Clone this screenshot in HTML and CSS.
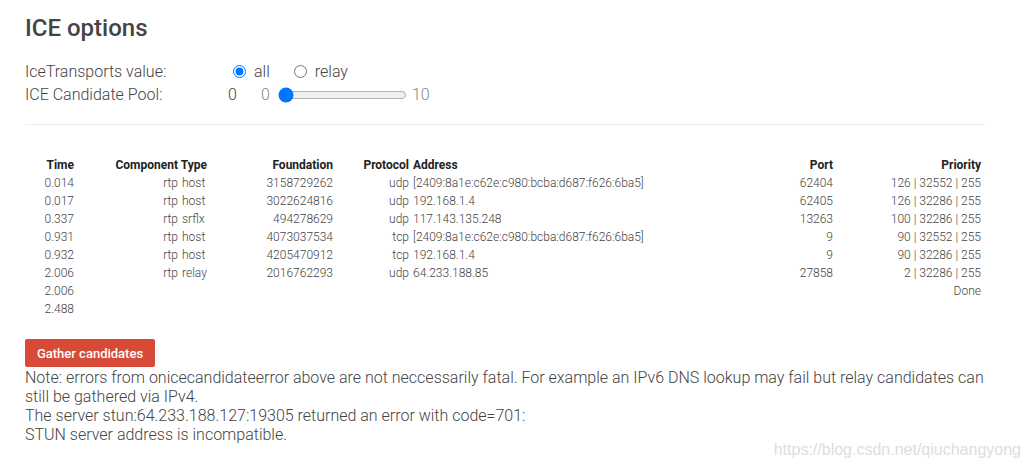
FILE: index.html
```html
<!DOCTYPE html>
<html>
<head>
<meta charset="utf-8">
<link rel="stylesheet" href="styles.css">
</head>
<body>
<div class="page">
  <h2 class="title">ICE options</h2>
  <div class="row">
    <span class="label">IceTransports value:</span>
    <input class="radio" type="radio" name="t" checked><span class="opt">all</span>
    <input class="radio radio-2" type="radio" name="t"><span class="opt">relay</span>
  </div>
  <div class="row">
    <span class="label">ICE Candidate Pool:</span>
    <span class="pool">0</span>
    <span class="muted">0</span>
    <input class="range" type="range" min="0" max="10" value="0">
    <span class="muted">10</span>
  </div>
  <div class="rule"></div>
  <table class="cands">
    <colgroup>
      <col class="c-time"><col class="c-comp"><col class="c-type"><col class="c-found"><col class="c-proto"><col class="c-addr"><col class="c-port"><col class="c-prio">
    </colgroup>
    <thead>
      <tr><th>Time</th><th>Component</th><th>Type</th><th>Foundation</th><th>Protocol</th><th class="l">Address</th><th>Port</th><th>Priority</th></tr>
    </thead>
    <tbody>
      <tr><td>0.014</td><td class="comp">rtp</td><td class="l">host</td><td>3158729262</td><td>udp</td><td class="l">[2409:8a1e:c62e:c980:bcba:d687:f626:6ba5]</td><td>62404</td><td>126 | 32552 | 255</td></tr>
      <tr><td>0.017</td><td class="comp">rtp</td><td class="l">host</td><td>3022624816</td><td>udp</td><td class="l">192.168.1.4</td><td>62405</td><td>126 | 32286 | 255</td></tr>
      <tr><td>0.337</td><td class="comp">rtp</td><td class="l">srflx</td><td>494278629</td><td>udp</td><td class="l">117.143.135.248</td><td>13263</td><td>100 | 32286 | 255</td></tr>
      <tr><td>0.931</td><td class="comp">rtp</td><td class="l">host</td><td>4073037534</td><td>tcp</td><td class="l">[2409:8a1e:c62e:c980:bcba:d687:f626:6ba5]</td><td>9</td><td>90 | 32552 | 255</td></tr>
      <tr><td>0.932</td><td class="comp">rtp</td><td class="l">host</td><td>4205470912</td><td>tcp</td><td class="l">192.168.1.4</td><td>9</td><td>90 | 32286 | 255</td></tr>
      <tr><td>2.006</td><td class="comp">rtp</td><td class="l">relay</td><td>2016762293</td><td>udp</td><td class="l">64.233.188.85</td><td>27858</td><td>2 | 32286 | 255</td></tr>
      <tr><td>2.006</td><td></td><td></td><td></td><td></td><td></td><td></td><td>Done</td></tr>
      <tr><td>2.488</td><td></td><td></td><td></td><td></td><td></td><td></td><td></td></tr>
    </tbody>
  </table>
  <button class="gather">Gather candidates</button>
  <div class="note">
    <div>Note: errors from onicecandidateerror above are not neccessarily fatal. For example an IPv6 DNS lookup may fail but relay candidates can still be gathered via IPv4.</div>
    <div>The server stun:64.233.188.127:19305 returned an error with code=701:<br>STUN server address is incompatible.</div>
  </div>
</div>
<div class="watermark">https://blog.csdn.net/qiuchangyong</div>
</body>
</html>
```
FILE: styles.css
```css
html, body {
  margin: 0;
  padding: 0;
  background: #fff;
}
body {
  font-family: Roboto, "Liberation Sans", sans-serif;
  font-weight: 300;
  color: #444;
  position: relative;
  height: 465px;
  overflow: hidden;
}
.page {
  width: 960px;
  padding: 14px 0 0 25px;
}
.title {
  margin: 0 0 17px;
  font-size: 24px;
  font-weight: 500;
  line-height: 29px;
  color: #444;
}
.row {
  display: flex;
  align-items: center;
  height: 23px;
  font-size: 16px;
  line-height: 23px;
  white-space: nowrap;
}
.label {
  width: 203px;
  flex: none;
}
.radio {
  margin: 0 8px 0 5px;
  width: 13px;
  height: 13px;
}
.radio-2 {
  margin-left: 24px;
}
.pool {
  width: 33px;
  color: #444;
}
.muted {
  color: #888;
}
.range {
  width: 129px;
  margin: 0 5px 0 8px;
}
.rule {
  height: 1px;
  background: #eee;
  margin-top: 18px;
}
.cands {
  margin-top: 31px;
  width: 956px;
  table-layout: fixed;
  border-collapse: collapse;
  font-size: 12px;
  line-height: 18px;
}
.c-time { width: 49px; }
.c-comp { width: 104px; }
.c-type { width: 29px; }
.c-found { width: 126px; }
.c-proto { width: 76px; }
.c-addr { width: 291px; }
.c-port { width: 133px; }
.c-prio { width: 148px; }
.cands th, .cands td {
  padding: 0;
  height: 18px;
  text-align: right;
  white-space: nowrap;
}
.cands th {
  font-weight: 700;
  color: #222;
}
.cands td.l {
  text-align: left;
  padding-left: 4px;
}
.cands th.l {
  text-align: left;
  padding-left: 4px;
}
.cands td.comp {
  padding-right: 0;
}
.gather {
  display: block;
  margin-top: 21px;
  width: 130px;
  height: 28px;
  padding: 0;
  border: none;
  border-radius: 2px;
  background: #d84a38;
  color: #fff;
  font-family: Roboto, sans-serif;
  font-size: 13px;
  font-weight: 500;
}
.note {
  margin-top: 1px;
  font-size: 16px;
  line-height: 19px;
}
.watermark {
  position: absolute;
  right: 9px;
  bottom: 6px;
  font-family: "Liberation Sans", Arial, sans-serif;
  font-size: 16px;
  color: #ddd;
}
```
